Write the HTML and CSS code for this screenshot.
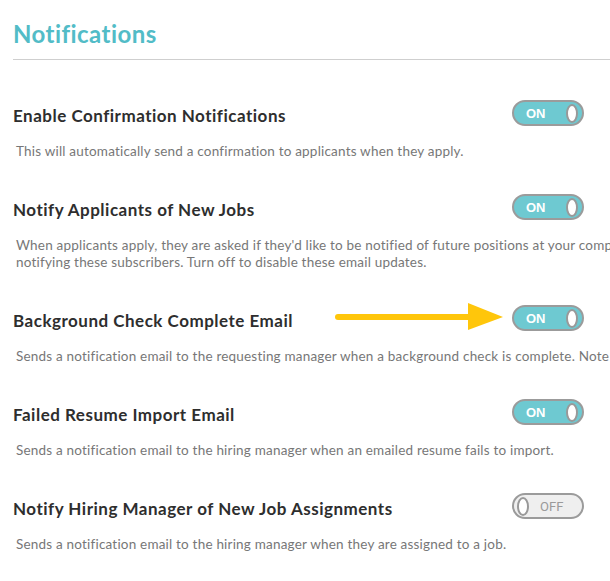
FILE: index.html
```html
<!DOCTYPE html>
<html lang="en">
<head>
<meta charset="utf-8">
<title>Notifications</title>
<link rel="stylesheet" href="styles.css">
</head>
<body>
<div class="page">
  <h1 class="heading">Notifications</h1>
  <div class="divider"></div>

  <div class="setting">
    <div class="setting-head">
      <h2 class="setting-title">Enable Confirmation Notifications</h2>
      <div class="toggle toggle-on"><span class="toggle-label">ON</span><span class="knob"></span></div>
    </div>
    <p class="setting-desc">This will automatically send a confirmation to applicants when they apply.</p>
  </div>

  <div class="setting">
    <div class="setting-head">
      <h2 class="setting-title">Notify Applicants of New Jobs</h2>
      <div class="toggle toggle-on"><span class="toggle-label">ON</span><span class="knob"></span></div>
    </div>
    <p class="setting-desc">When applicants apply, they are asked if they'd like to be notified of future positions at your company.<br>notifying these subscribers. Turn off to disable these email updates.</p>
  </div>

  <div class="setting">
    <div class="setting-head">
      <h2 class="setting-title">Background Check Complete Email</h2>
      <div class="toggle toggle-on"><span class="toggle-label">ON</span><span class="knob"></span></div>
    </div>
    <p class="setting-desc">Sends a notification email to the requesting manager when a background check is complete. Note</p>
  </div>

  <div class="setting">
    <div class="setting-head">
      <h2 class="setting-title">Failed Resume Import Email</h2>
      <div class="toggle toggle-on"><span class="toggle-label">ON</span><span class="knob"></span></div>
    </div>
    <p class="setting-desc">Sends a notification email to the hiring manager when an emailed resume fails to import.</p>
  </div>

  <div class="setting">
    <div class="setting-head">
      <h2 class="setting-title">Notify Hiring Manager of New Job Assignments</h2>
      <div class="toggle toggle-off"><span class="knob"></span><span class="toggle-label">OFF</span></div>
    </div>
    <p class="setting-desc">Sends a notification email to the hiring manager when they are assigned to a job.</p>
  </div>

  <svg class="arrow" width="180" height="34" viewBox="0 0 180 34" aria-hidden="true">
    <line x1="5" y1="15" x2="140" y2="15" stroke="#ffc60b" stroke-width="6" stroke-linecap="round"/>
    <polygon points="135,1 170,15 135,28" fill="#ffc60b"/>
  </svg>
</div>
</body>
</html>
```

FILE: styles.css
```css
html, body {
  margin: 0;
  padding: 0;
  overflow: hidden;
  background: #ffffff;
}

.page {
  position: relative;
  width: 597px;
  padding: 19px 0 0 13px;
  font-family: Lato, "Open Sans", sans-serif;
}

.heading {
  margin: 0;
  font-size: 24px;
  line-height: 30px;
  font-weight: 700;
  letter-spacing: 0.45px;
  color: #52bcc7;
}

.divider {
  margin-top: 10px;
  height: 1px;
  background: #cfcfcf;
  margin-bottom: 40px;
}

.setting {
  margin-bottom: 34px;
}

.setting-head {
  display: flex;
  justify-content: space-between;
  align-items: flex-start;
  padding-right: 26px;
}

.setting-title {
  margin: 6px 0 0 0;
  font-size: 17px;
  line-height: 20px;
  font-weight: 700;
  letter-spacing: 0.5px;
  color: #2e2e2e;
}

.setting-desc {
  margin: 17px 0 0 3px;
  font-size: 13.5px;
  line-height: 17px;
  letter-spacing: 0.2px;
  color: #777777;
  white-space: nowrap;
}

.toggle {
  box-sizing: border-box;
  width: 72px;
  height: 26px;
  border: 2px solid #9b9b9b;
  border-radius: 13px;
  display: flex;
  align-items: center;
}

.toggle-on {
  background: #6ec9d1;
  justify-content: space-between;
  padding: 0 4px 0 12px;
}

.toggle-off {
  background: #efefef;
  padding: 0 0 0 3px;
}

.toggle-label {
  font-size: 13px;
  line-height: 1;
}

.toggle-on .toggle-label {
  font-family: "Liberation Sans", Arial, sans-serif;
  font-weight: 700;
  color: #ffffff;
}

.toggle-off .toggle-label {
  font-family: Roboto, sans-serif;
  color: #9a9a9a;
  margin-left: 11px;
}

.knob {
  box-sizing: border-box;
  width: 12px;
  height: 19px;
  border: 2px solid #999999;
  border-radius: 50%;
  background: #ffffff;
}

.arrow {
  position: absolute;
  left: 333px;
  top: 302px;
}
```
